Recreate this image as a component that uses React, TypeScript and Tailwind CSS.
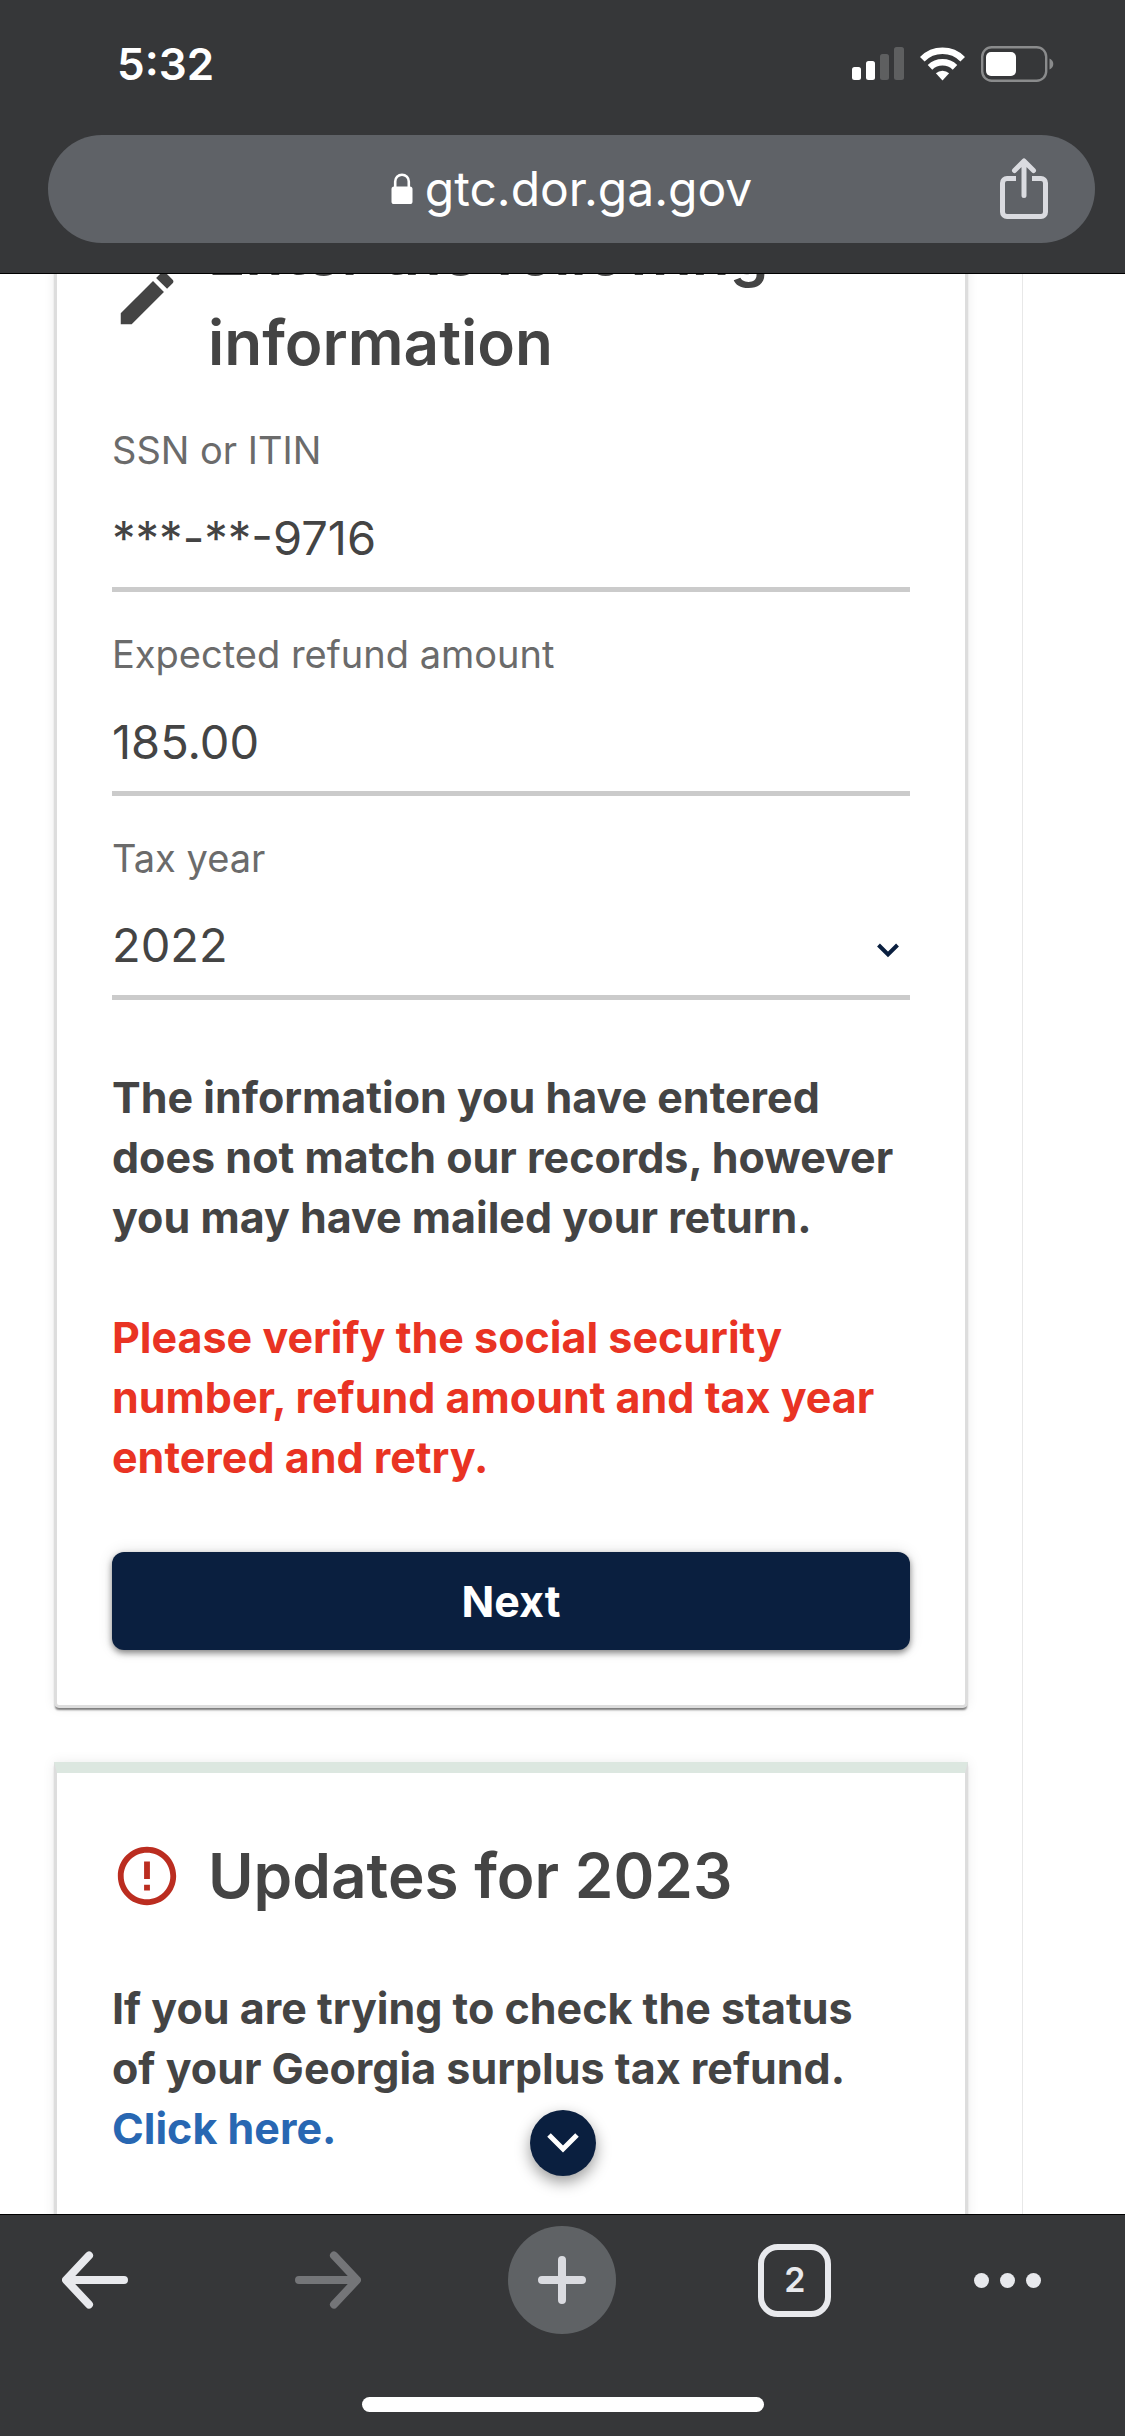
import { useState } from 'react'
import type { ReactNode } from 'react'
import { MdEdit, MdErrorOutline } from 'react-icons/md'

const StatusBar = () => (
  <div className="flex h-[135px] items-start justify-between pt-9 pr-[71px] pl-[117px]">
    <span className="text-[44px] leading-[56px] font-semibold">5:32</span>
    <div className="flex items-center gap-4 pt-[10px]">
      <svg width="52" height="34" viewBox="0 0 52 34" fill="#fff" aria-label="Signal">
        <rect x="0" y="20" width="9" height="13" rx="2.5" />
        <rect x="14" y="14" width="9" height="19" rx="2.5" />
        <rect x="28" y="7" width="9" height="26" rx="2.5" opacity="0.2" />
        <rect x="42" y="0" width="10" height="33" rx="2.5" opacity="0.2" />
      </svg>
      <svg width="45" height="34" viewBox="0 0 45 34" aria-label="Wi-Fi">
        <g fill="none" stroke="#fff" strokeWidth="6.5">
          <path d="M2.3 12.2a28.5 28.5 0 0 1 40.4 0" />
          <path d="M10 20.3a18 18 0 0 1 25 0" />
        </g>
        <path d="M22.5 33.5l-6.6-7.2a9.6 9.6 0 0 1 13.2 0z" fill="#fff" />
      </svg>
      <svg width="73" height="36" viewBox="0 0 73 36" aria-label="Battery">
        <rect x="1.2" y="1.2" width="64" height="33.6" rx="9.5" fill="none" stroke="#8a8b8c" strokeWidth="2.4" />
        <rect x="5" y="6" width="30" height="24" rx="5" fill="#fff" />
        <path d="M68.5 12.5c2.4 1 3.8 3 3.8 5.5s-1.4 4.5-3.8 5.5z" fill="#8a8b8c" />
      </svg>
    </div>
  </div>
)

const AddressBar = () => (
  <div className="mr-[30px] mb-[30px] ml-12 grid h-[108px] grid-cols-[1fr_auto_1fr] items-center rounded-full bg-[#5f6267]">
    <span />
    <button type="button" className="flex items-center gap-3">
      <svg width="22" height="32" viewBox="0 0 22 32" aria-hidden="true">
        <path d="M4.2 15V8.5a6.8 6.8 0 0 1 13.6 0V15" fill="none" stroke="#fff" strokeWidth="2.6" />
        <rect x="0.5" y="13.5" width="21" height="17.5" rx="2.6" fill="#fff" />
      </svg>
      <span className="text-[48px] leading-[60px]">gtc.dor.ga.gov</span>
    </button>
    <button type="button" aria-label="Share" className="mr-[46px] justify-self-end">
      <svg width="50" height="62" viewBox="0 0 50 62" fill="none" stroke="#dadbe0" strokeWidth="5">
        <path d="M17 20.5H8a4.5 4.5 0 0 0-4.5 4.5V54a4.5 4.5 0 0 0 4.5 4.5H42a4.5 4.5 0 0 0 4.5-4.5V25a4.5 4.5 0 0 0-4.5-4.5H33" />
        <path d="M25 37.5V4M15.5 12.5L25 3l9.5 9.5" strokeLinecap="round" strokeLinejoin="round" />
      </svg>
    </button>
  </div>
)

const CardTitle = ({ icon, children }: { icon: ReactNode; children: ReactNode }) => (
  <div className="flex items-center gap-[26px]">
    {icon}
    <h2 className="text-[62px] leading-[90px] font-semibold">{children}</h2>
  </div>
)

const fieldClass =
  'mt-[33px] block h-[85px] w-full appearance-none rounded-none border-b-[5px] border-[#cbcbcb] bg-transparent pb-5 text-[47px] leading-[60px] text-[#444] outline-none'

const Field = ({ id, label, children }: { id: string; label: string; children: ReactNode }) => (
  <div className="mt-[38px]">
    <label htmlFor={id} className="block text-[38px] leading-[48px] text-[#6b6b6b]">
      {label}
    </label>
    {children}
  </div>
)

const RefundCard = () => {
  const [ssn, setSsn] = useState('***-**-9716')
  const [amount, setAmount] = useState('185.00')
  const [year, setYear] = useState('2022')

  return (
    <form
      onSubmit={(e) => e.preventDefault()}
      className="rounded-b-[5px] border-[3px] border-[#ddd] bg-white p-[55px] pt-0 shadow-[0_3px_2px_-1px_rgba(0,0,0,0.5),0_0_12px_rgba(0,0,0,0.08)]"
    >
      <CardTitle icon={<MdEdit className="size-[70px] shrink-0" />}>Enter the following information</CardTitle>

      <Field id="ssn" label="SSN or ITIN">
        <input id="ssn" className={fieldClass} value={ssn} onChange={(e) => setSsn(e.target.value)} />
      </Field>
      <Field id="amount" label="Expected refund amount">
        <input id="amount" className={fieldClass} value={amount} onChange={(e) => setAmount(e.target.value)} />
      </Field>
      <Field id="year" label="Tax year">
        <div className="relative">
          <select id="year" className={fieldClass} value={year} onChange={(e) => setYear(e.target.value)}>
            <option>2022</option>
            <option>2021</option>
            <option>2020</option>
          </select>
          <svg
            className="pointer-events-none absolute top-7 right-[11px]"
            width="22"
            height="15"
            viewBox="0 0 22 15"
            fill="none"
            stroke="#0a1f3f"
            strokeWidth="4"
          >
            <path d="M1.5 2l9.5 9.5L20.5 2" />
          </svg>
        </div>
      </Field>

      <p className="mt-[67px] text-[43px] leading-[60px] font-bold">
        The information you have entered does not match our records, however you may have mailed your return.
      </p>
      <p className="mt-[60px] text-[43px] leading-[60px] font-bold text-[#e93323]">
        Please verify the social security number, refund amount and tax year entered and retry.
      </p>

      <button
        type="submit"
        className="mt-[65px] block h-[98px] w-full rounded-xl bg-[#0a1f3f] text-[43px] font-bold text-white shadow-[0_3px_6px_rgba(0,0,0,0.45),0_0_15px_rgba(0,0,0,0.12)]"
      >
        Next
      </button>
    </form>
  )
}

const UpdatesCard = () => (
  <section className="mt-[54px] border-x-[3px] border-t-[11px] border-x-[#ddd] border-t-[#dce7e0] bg-white px-[55px] pt-[58px] pb-[120px] shadow-[0_3px_2px_-1px_rgba(0,0,0,0.5),0_0_12px_rgba(0,0,0,0.08)]">
    <CardTitle icon={<MdErrorOutline className="size-[70px] shrink-0 text-[#bb2d20]" />}>Updates for 2023</CardTitle>
    <p className="mt-[57px] text-[43px] leading-[60px] font-bold">
      If you are trying to check the status of&nbsp;your Georgia surplus tax refund.{' '}
      <a href="#surplus" className="block text-[#2867b2]">
        Click here.
      </a>
    </p>
  </section>
)

const BottomBar = () => (
  <footer className="border-t border-black bg-[#363739] pt-[11px] pb-6 text-[#e8e9ed]">
    <nav className="flex items-center justify-between pr-[84px] pl-[41px]">
      <button type="button" aria-label="Back" className="flex size-[108px] items-center justify-center">
        <svg width="66" height="60" viewBox="0 0 66 60" fill="none" stroke="currentColor" strokeWidth="8">
          <path d="M62 30H5M27 5.5L4 30l23 24.5" strokeLinecap="round" strokeLinejoin="round" />
        </svg>
      </button>
      <button type="button" aria-label="Forward" disabled className="flex size-[108px] items-center justify-center text-[#747578]">
        <svg width="66" height="60" viewBox="0 0 66 60" fill="none" stroke="currentColor" strokeWidth="8">
          <path d="M4 30h57M39 5.5L62 30 39 54.5" strokeLinecap="round" strokeLinejoin="round" />
        </svg>
      </button>
      <button type="button" aria-label="New tab" className="flex size-[108px] items-center justify-center rounded-full bg-[#5f6265] text-[#dadbe0]">
        <svg width="52" height="52" viewBox="0 0 52 52" fill="none" stroke="currentColor" strokeWidth="8" strokeLinecap="round">
          <path d="M26 6v40M6 26h40" />
        </svg>
      </button>
      <button type="button" aria-label="2 open tabs" className="flex size-[108px] items-center justify-center">
        <span className="flex size-[73px] items-center justify-center rounded-[20px] border-[6px] border-current text-[34px] leading-none font-semibold">
          2
        </span>
      </button>
      <button type="button" aria-label="More" className="flex h-[108px] items-center gap-[11px]">
        <span className="size-[15px] rounded-full bg-current" />
        <span className="size-[15px] rounded-full bg-current" />
        <span className="size-[15px] rounded-full bg-current" />
      </button>
    </nav>
    <div className="mx-auto mt-[63px] h-[15px] w-[402px] rounded-full bg-white" />
  </footer>
)

const App = () => {
  return (
    <div className="flex h-screen flex-col bg-white font-['Inter','Liberation_Sans',sans-serif] text-[#444]">
      <header className="relative z-10 border-b border-black bg-[#363739] text-white">
        <StatusBar />
        <AddressBar />
      </header>

      <main className="relative min-h-0 flex-1 overflow-hidden pr-[102px]">
        {/* page is scrolled part way down the first card */}
        <div className="-mt-[69px] border-r border-[#e8e8e8] px-[54px]">
          <RefundCard />
          <UpdatesCard />
        </div>

        <button
          type="button"
          aria-label="Scroll down"
          className="absolute bottom-[38px] left-1/2 flex size-[66px] -translate-x-1/2 items-center justify-center rounded-full bg-[#0a1f3f] shadow-[0_6px_15px_rgba(0,0,0,0.4)]"
        >
          <svg width="34" height="22" viewBox="0 0 34 22" fill="none" stroke="#fff" strokeWidth="5">
            <path d="M3 3l14 14L31 3" />
          </svg>
        </button>
      </main>

      <BottomBar />
    </div>
  )
}

export default App
